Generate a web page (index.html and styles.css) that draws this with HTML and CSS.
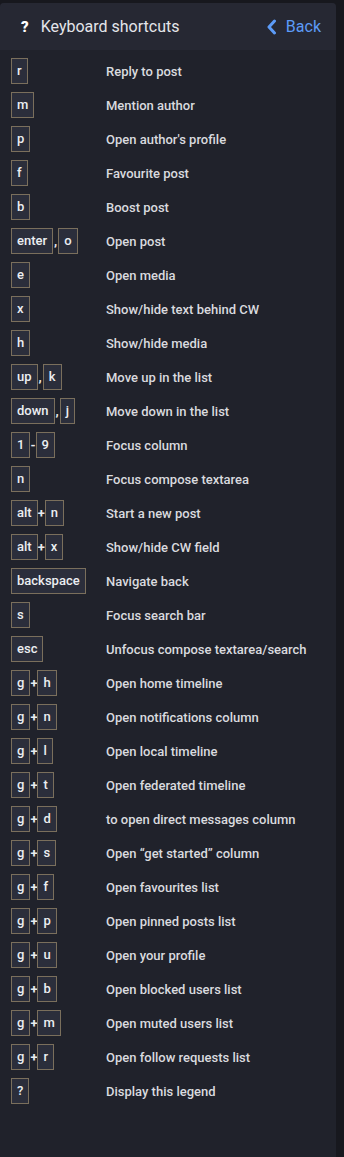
FILE: index.html
```html
<!DOCTYPE html>
<html lang="en">
  <head>
    <meta charset="UTF-8" />
    <meta name="viewport" content="width=device-width, initial-scale=1.0" />
    <title>Keyboard shortcuts</title>
    <link rel="stylesheet" href="styles.css">
  </head>
  <body>
    <div class="column">
      <header class="column-header">
        <h1><span class="header-icon">?</span> Keyboard shortcuts</h1>
        <a class="back" href="#">
          <svg width="11" height="16" viewBox="0 0 11 16"><path d="M8.5 2 L3 8 L8.5 14" fill="none" stroke="#5c9bf7" stroke-width="3" stroke-linecap="round" stroke-linejoin="round"/></svg>
          Back
        </a>
      </header>

      <div class="shortcuts">
        <div class="keys"><kbd>r</kbd></div><div class="desc">Reply to post</div>
        <div class="keys"><kbd>m</kbd></div><div class="desc">Mention author</div>
        <div class="keys"><kbd>p</kbd></div><div class="desc">Open author's profile</div>
        <div class="keys"><kbd>f</kbd></div><div class="desc">Favourite post</div>
        <div class="keys"><kbd>b</kbd></div><div class="desc">Boost post</div>
        <div class="keys"><kbd>enter</kbd><span class="sep">,</span><kbd>o</kbd></div><div class="desc">Open post</div>
        <div class="keys"><kbd>e</kbd></div><div class="desc">Open media</div>
        <div class="keys"><kbd>x</kbd></div><div class="desc">Show/hide text behind CW</div>
        <div class="keys"><kbd>h</kbd></div><div class="desc">Show/hide media</div>
        <div class="keys"><kbd>up</kbd><span class="sep">,</span><kbd>k</kbd></div><div class="desc">Move up in the list</div>
        <div class="keys"><kbd>down</kbd><span class="sep">,</span><kbd>j</kbd></div><div class="desc">Move down in the list</div>
        <div class="keys"><kbd>1</kbd>-<kbd>9</kbd></div><div class="desc">Focus column</div>
        <div class="keys"><kbd>n</kbd></div><div class="desc">Focus compose textarea</div>
        <div class="keys"><kbd>alt</kbd>+<kbd>n</kbd></div><div class="desc">Start a new post</div>
        <div class="keys"><kbd>alt</kbd>+<kbd>x</kbd></div><div class="desc">Show/hide CW field</div>
        <div class="keys"><kbd>backspace</kbd></div><div class="desc">Navigate back</div>
        <div class="keys"><kbd>s</kbd></div><div class="desc">Focus search bar</div>
        <div class="keys"><kbd>esc</kbd></div><div class="desc">Unfocus compose textarea/search</div>
        <div class="keys"><kbd>g</kbd>+<kbd>h</kbd></div><div class="desc">Open home timeline</div>
        <div class="keys"><kbd>g</kbd>+<kbd>n</kbd></div><div class="desc">Open notifications column</div>
        <div class="keys"><kbd>g</kbd>+<kbd>l</kbd></div><div class="desc">Open local timeline</div>
        <div class="keys"><kbd>g</kbd>+<kbd>t</kbd></div><div class="desc">Open federated timeline</div>
        <div class="keys"><kbd>g</kbd>+<kbd>d</kbd></div><div class="desc">to open direct messages column</div>
        <div class="keys"><kbd>g</kbd>+<kbd>s</kbd></div><div class="desc">Open “get started” column</div>
        <div class="keys"><kbd>g</kbd>+<kbd>f</kbd></div><div class="desc">Open favourites list</div>
        <div class="keys"><kbd>g</kbd>+<kbd>p</kbd></div><div class="desc">Open pinned posts list</div>
        <div class="keys"><kbd>g</kbd>+<kbd>u</kbd></div><div class="desc">Open your profile</div>
        <div class="keys"><kbd>g</kbd>+<kbd>b</kbd></div><div class="desc">Open blocked users list</div>
        <div class="keys"><kbd>g</kbd>+<kbd>m</kbd></div><div class="desc">Open muted users list</div>
        <div class="keys"><kbd>g</kbd>+<kbd>r</kbd></div><div class="desc">Open follow requests list</div>
        <div class="keys"><kbd>?</kbd></div><div class="desc">Display this legend</div>
      </div>
    </div>
  </body>
</html>
```

FILE: styles.css
```css
body {
  font-family: Roboto, "Liberation Sans", sans-serif;
  margin: 0;
  padding: 0;
  background: #17181e;
  color: #d9dadf;
}
.column {
  margin-top: 3px;
  width: 336px;
  min-height: 1154px;
  background: #20222b;
  border-radius: 4px 4px 0 0;
  overflow: hidden;
}
.column-header {
  display: flex;
  justify-content: space-between;
  align-items: center;
  height: 47px;
  background: #262833;
  padding: 0 15px 0 21px;
}
.column-header h1 {
  margin: 0;
  font-size: 16px;
  font-weight: 400;
  color: #e4e5ea;
  display: flex;
  align-items: center;
}
.header-icon {
  font-weight: 900;
  font-size: 15px;
  color: #fff;
  margin-right: 12px;
}
.back {
  display: flex;
  align-items: center;
  gap: 9px;
  color: #5c9bf7;
  font-size: 16px;
  text-decoration: none;
}
.shortcuts {
  display: grid;
  grid-template-columns: 95px auto;
  grid-auto-rows: 34px;
  padding: 4px 0 0 11px;
  align-items: center;
}
.keys {
  display: flex;
  align-items: center;
  font-size: 13px;
  font-weight: 700;
  color: #e9eaee;
}
.sep {
  padding: 0 1px;
}
.desc {
  font-size: 13px;
  font-weight: 500;
  color: #d9dadf;
}
kbd {
  display: inline-block;
  font-family: Roboto, "Liberation Sans", sans-serif;
  font-size: 13px;
  font-weight: 500;
  line-height: 18px;
  padding: 3px 5px;
  background: #2b2e3b;
  border: 1px solid #7a6f5c;
  color: #eceef2;
}
```
